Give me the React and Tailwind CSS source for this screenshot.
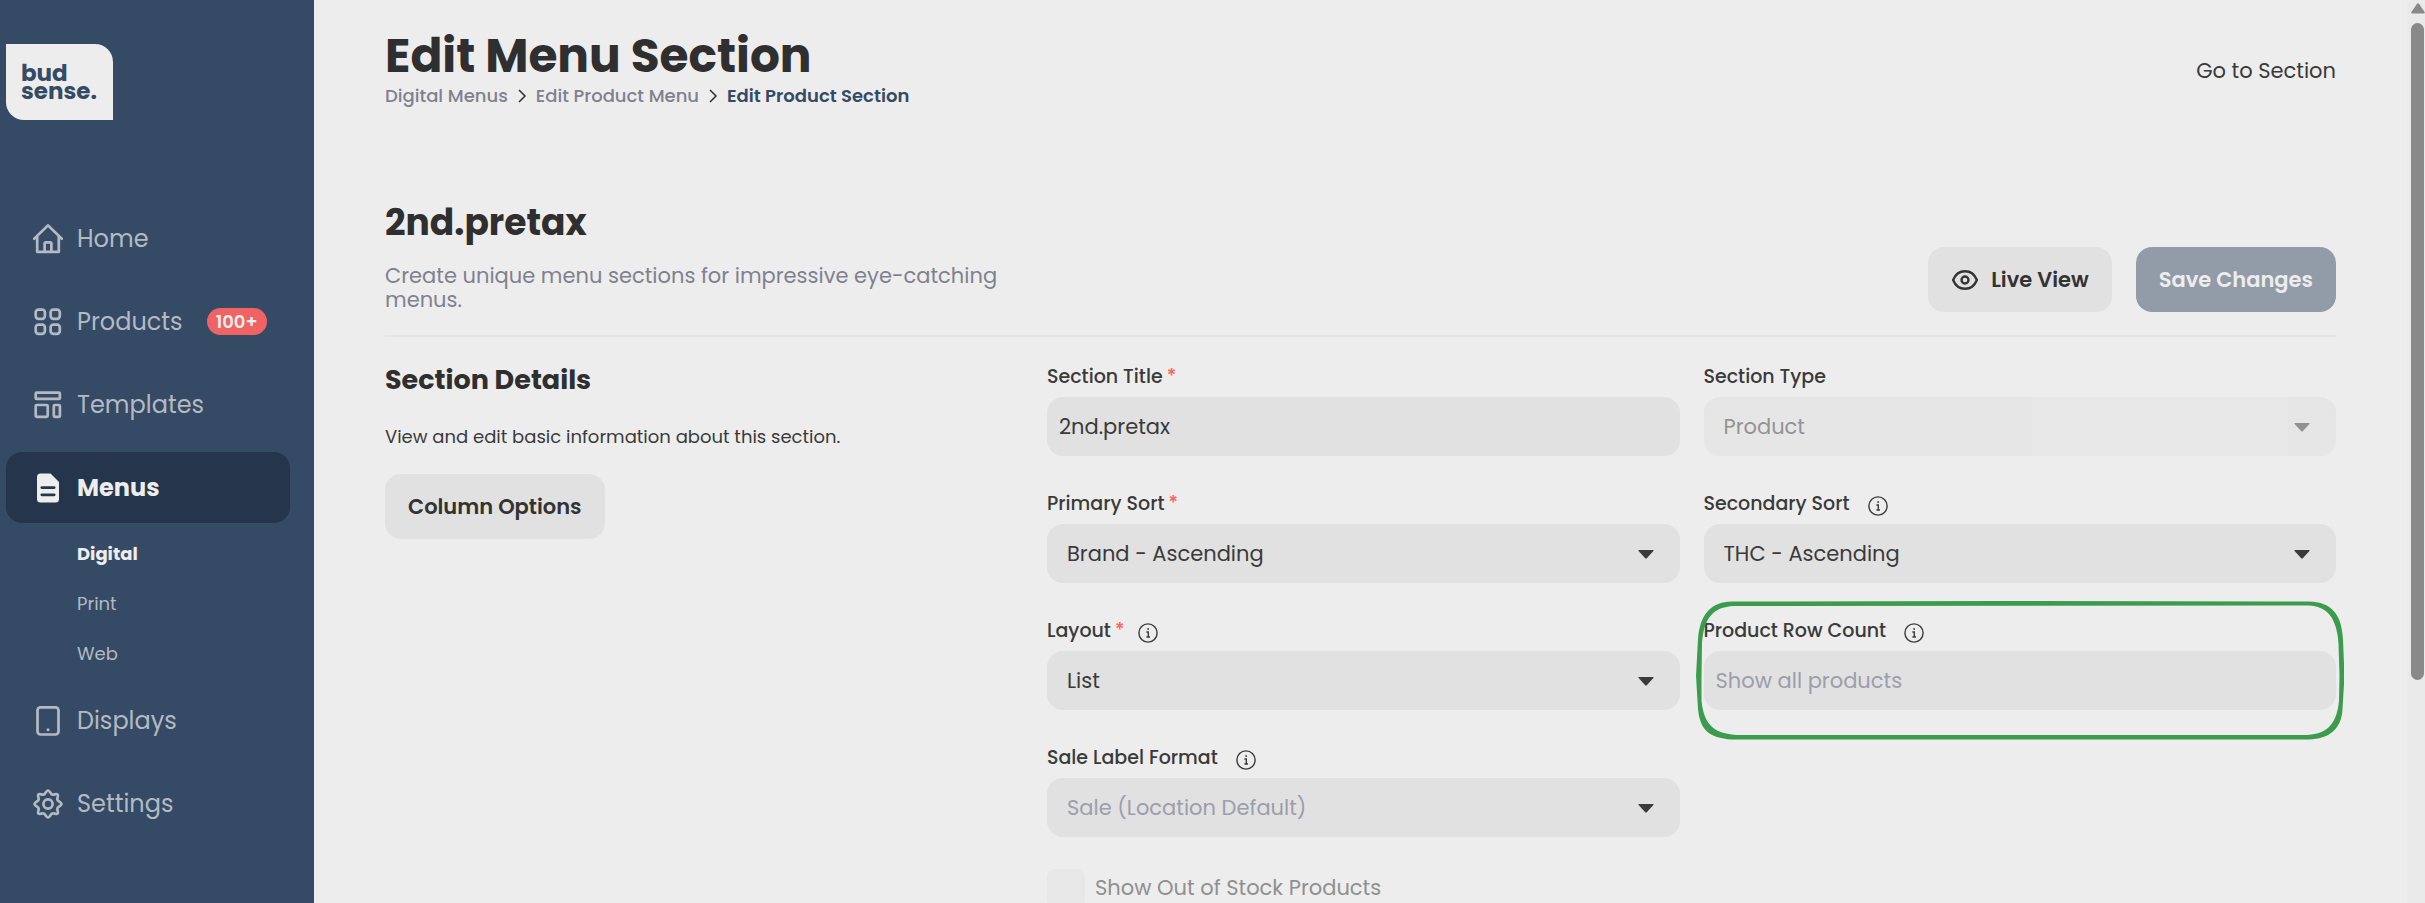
import React from 'react';

const navClass = 'flex h-[71px] items-center rounded-2xl pl-[26px] text-2xl text-[#b3bac3]';

const Icon = ({ children, className = 'h-8 w-8' }) => (
  <svg
    viewBox="0 0 32 32"
    className={className}
    fill="none"
    stroke="currentColor"
    strokeWidth="2.7"
    strokeLinecap="round"
    strokeLinejoin="round"
    aria-hidden="true"
  >
    {children}
  </svg>
);

const HomeIcon = () => (
  <Icon>
    <path d="M2.2 15.8 L16 2.4 L29.8 15.8" />
    <path d="M5.2 14 V28.8 H26.8 V14" />
    <path d="M12.6 28.4 V20.6 Q12.6 19.4 13.8 19.4 H18.2 Q19.4 19.4 19.4 20.6 V28.4" />
  </Icon>
);

const ProductsIcon = () => (
  <Icon>
    <rect x="3.7" y="3.7" width="9.2" height="9.2" rx="2.8" />
    <rect x="18.6" y="3.7" width="9.2" height="9.2" rx="2.8" />
    <rect x="3.7" y="18.6" width="9.2" height="9.2" rx="2.8" />
    <rect x="18.6" y="18.6" width="9.2" height="9.2" rx="2.8" />
  </Icon>
);

const TemplatesIcon = () => (
  <Icon>
    <rect x="3.7" y="3.7" width="24.2" height="6.2" rx="1" />
    <rect x="3.7" y="16" width="12" height="11.8" rx="1" />
    <rect x="21.8" y="16" width="6.1" height="11.8" rx="1" />
  </Icon>
);

const MenusIcon = () => (
  <Icon>
    <path
      d="M8.5 1.5 H18.5 L27 10 V27 Q27 30.5 23.5 30.5 H8.5 Q5 30.5 5 27 V5 Q5 1.5 8.5 1.5 Z"
      fill="currentColor"
      stroke="none"
    />
    <path d="M9.8 15.6 H22.2 M9.8 22.8 H22.2" stroke="#25364c" />
  </Icon>
);

const DisplaysIcon = () => (
  <Icon>
    <rect x="5.5" y="2.3" width="21" height="27.2" rx="3" />
    <circle cx="16" cy="24.8" r="1.5" fill="currentColor" stroke="none" />
  </Icon>
);

const SettingsIcon = () => (
  <Icon>
    <path d="M16 2.5 C18 2.5 18.6 6 20.2 6.6 C21.8 7.3 24.3 5.1 25.6 6.4 C26.9 7.7 24.7 10.2 25.4 11.8 C26 13.4 29.5 14 29.5 16 C29.5 18 26 18.6 25.4 20.2 C24.7 21.8 26.9 24.3 25.6 25.6 C24.3 26.9 21.8 24.7 20.2 25.4 C18.6 26 18 29.5 16 29.5 C14 29.5 13.4 26 11.8 25.4 C10.2 24.7 7.7 26.9 6.4 25.6 C5.1 24.3 7.3 21.8 6.6 20.2 C6 18.6 2.5 18 2.5 16 C2.5 14 6 13.4 6.6 11.8 C7.3 10.2 5.1 7.7 6.4 6.4 C7.7 5.1 10.2 7.3 11.8 6.6 C13.4 6 14 2.5 16 2.5 Z" />
    <circle cx="16" cy="16" r="4.6" />
  </Icon>
);

const EyeIcon = () => (
  <Icon className="h-7 w-7">
    <path d="M2.4 16 C5 9.6 10 6 16 6 S27 9.6 29.6 16 C27 22.4 22 26 16 26 S5 22.4 2.4 16 Z" />
    <circle cx="16" cy="16" r="4" />
  </Icon>
);

const InfoIcon = () => (
  <svg viewBox="0 0 20 20" className="h-5 w-5" fill="none" stroke="currentColor" strokeWidth="1.4" aria-hidden="true">
    <circle cx="10" cy="10" r="9.1" />
    <path d="M8.4 9 H10.3 V14 M8.4 14 H12" />
    <circle cx="10.1" cy="6" r="0.9" fill="currentColor" stroke="none" />
  </svg>
);

const Crumb = () => (
  <svg viewBox="0 0 10 16" className="h-4 w-[10px]" fill="none" stroke="#2f2f2f" strokeWidth="1.5" aria-hidden="true">
    <path d="M2 2 L8 8 L2 14" />
  </svg>
);

// hand-drawn marker around a field
const Highlight = () => (
  <svg
    viewBox="0 0 648 139"
    preserveAspectRatio="none"
    className="pointer-events-none absolute -top-2 -left-2 h-[139px] w-[calc(100%+16px)]"
    aria-hidden="true"
  >
    <path
      fill="#3c9c4e"
      fillRule="evenodd"
      d="M36 0.5 L300 0 L612 0.5 C636 1 645 14 646.5 38 L648 75 L646 108 C645 128 633 138 612 138.5 L36 138.5 C12 137 4 128 2 108 L0 75 L2 38 C4 14 14 1 36 0.5 Z M38 5 C16 6 8 18 6 42 L5.5 75 L5.5 100 C8 122 16 132 40 134 L610 134 C628 133 640 126 642.5 100 L643 75 L642 42 C640 16 630 5 612 4.5 Z"
    />
  </svg>
);

const NavItem = ({ icon, label, badge, active }) => (
  <a href="#" className={active ? `${navClass} bg-[#25364c] font-bold text-[#ededed]` : navClass}>
    {icon}
    <span className="ml-[13px]">{label}</span>
    {badge && (
      <span className="ml-6 flex h-[27px] w-[60px] items-center justify-center rounded-full bg-[#f06364] text-lg font-semibold text-[#ededed]">
        {badge}
      </span>
    )}
  </a>
);

const Label = ({ id, text, required, info }) => (
  <div className="flex h-[42px] items-center pt-[3px] text-[19px] font-medium">
    <label htmlFor={id}>
      {text}
      {required && <span className="ml-1 text-[#ff6161]">*</span>}
    </label>
    {info && (
      <button type="button" aria-label={`About ${text}`} className={required ? 'ml-[14px] pt-0.5' : 'ml-[18px] pt-0.5'}>
        <InfoIcon />
      </button>
    )}
  </div>
);

const SelectField = ({ id, label, value, required, info, disabled, muted }) => (
  <div>
    <Label id={id} text={label} required={required} info={info} />
    <div className={disabled ? 'relative opacity-50' : 'relative'}>
      <select
        id={id}
        disabled={disabled}
        className={`h-[59px] w-full appearance-none rounded-2xl bg-[#e1e1e1] px-5 text-[21px] opacity-100 ${muted ? 'text-[#9c9eab]' : ''}`}
      >
        <option>{value}</option>
      </select>
      <svg viewBox="0 0 16 9" className="pointer-events-none absolute top-[26px] right-[26px] h-[9px] w-4" aria-hidden="true">
        <path d="M1 0 H15 Q16 0 15.4 1 L9 8 Q8 9 7 8 L0.6 1 Q0 0 1 0 Z" fill="#3a3a3a" />
      </svg>
    </div>
  </div>
);

const TextField = ({ id, label, value, placeholder, required, info }) => (
  <div>
    <Label id={id} text={label} required={required} info={info} />
    <input
      id={id}
      type="text"
      defaultValue={value}
      placeholder={placeholder}
      className="h-[59px] w-full rounded-2xl bg-[#e1e1e1] px-3 text-[21px] placeholder:text-[#9c9eab]"
    />
  </div>
);

const Sidebar = () => (
  <aside className="w-[314px] shrink-0 bg-[#354a64] pr-6 pl-1.5">
    <a
      href="#"
      className="mt-11 flex h-[76px] w-[107px] flex-col justify-center rounded-tr-[18px] rounded-bl-[18px] bg-[#ededed] pl-[15px] text-[23px] leading-[18px] font-bold text-[#354a64]"
    >
      <span>bud</span>
      <span>sense.</span>
    </a>
    <nav className="mt-[83px] flex flex-col gap-3">
      <NavItem icon={<HomeIcon />} label="Home" />
      <NavItem icon={<ProductsIcon />} label="Products" badge="100+" />
      <NavItem icon={<TemplatesIcon />} label="Templates" />
      <div>
        <NavItem icon={<MenusIcon />} label="Menus" active />
        <ul className="mt-1.5 -mb-1.5 pl-[71px] text-lg text-[#b3bac3]">
          <li className="flex h-[50px] items-center">
            <a href="#" className="font-bold text-[#ededed]">Digital</a>
          </li>
          <li className="flex h-[50px] items-center">
            <a href="#">Print</a>
          </li>
          <li className="flex h-[50px] items-center">
            <a href="#">Web</a>
          </li>
        </ul>
      </div>
      <NavItem icon={<DisplaysIcon />} label="Displays" />
      <NavItem icon={<SettingsIcon />} label="Settings" />
    </nav>
  </aside>
);

const App = () => {
  return (
    <div className="flex h-screen overflow-hidden bg-[#ededed] font-['Poppins','Inter',sans-serif] text-[#3a3a3a]">
      <Sidebar />

      <main className="min-w-0 flex-1 overflow-hidden pr-[71px] pl-[71px]">
        <header className="flex items-center justify-between pt-[29px]">
          <div>
            <h1 className="text-[47px] leading-[53px] font-bold text-[#2f2f2f]">Edit Menu Section</h1>
            <nav className="flex h-[27px] items-center gap-[9px] text-lg font-medium text-[#7f818d]">
              <a href="#">Digital Menus</a>
              <Crumb />
              <a href="#">Edit Product Menu</a>
              <Crumb />
              <a href="#" className="font-semibold text-[#354a64]">Edit Product Section</a>
            </nav>
          </div>
          <a href="#" className="pt-1 text-[21px]">Go to Section</a>
        </header>

        <section className="mt-[88px] flex items-end justify-between border-b-2 border-[#e5e5e5] pb-[23px]">
          <div className="w-[632px]">
            <h2 className="text-4xl leading-[52px] font-bold text-[#2f2f2f]">2nd.pretax</h2>
            <p className="mt-[15px] text-[21px] leading-6 text-[#7f818d]">
              Create unique menu sections for impressive eye-catching menus.
            </p>
          </div>
          <div className="flex gap-6">
            <button type="button" className="flex h-[65px] items-center gap-3 rounded-2xl bg-[#e1e1e1] px-[23px] text-[21px] font-semibold text-[#333333]">
              <EyeIcon />
              Live View
            </button>
            <button type="button" className="h-[65px] rounded-2xl bg-[#929ca9] px-[23px] text-[21px] font-semibold text-[#ededed]">
              Save Changes
            </button>
          </div>
        </section>

        <section className="grid grid-cols-[662fr_1289fr] pt-[18px]">
          <div>
            <h3 className="text-[27px] leading-[50px] font-bold text-[#2f2f2f]">Section Details</h3>
            <p className="mt-[18px] text-lg leading-[28px]">View and edit basic information about this section.</p>
            <button type="button" className="mt-[23px] h-[65px] rounded-2xl bg-[#e1e1e1] px-[23px] text-[21px] font-semibold text-[#333333]">
              Column Options
            </button>
          </div>

          <form className="grid grid-cols-2 gap-x-6 gap-y-[26px]">
            <TextField id="title" label="Section Title" value="2nd.pretax" required />
            <SelectField id="type" label="Section Type" value="Product" disabled />
            <SelectField id="primary" label="Primary Sort" value="Brand - Ascending" required />
            <SelectField id="secondary" label="Secondary Sort" value="THC - Ascending" info />
            <SelectField id="layout" label="Layout" value="List" required info />
            <div className="relative">
              <TextField id="rows" label="Product Row Count" placeholder="Show all products" info />
              <Highlight />
            </div>
            <SelectField id="sale" label="Sale Label Format" value="Sale (Location Default)" info muted />
            <label className="col-span-2 mt-1.5 flex items-center gap-2.5 text-[21px] text-[#909090]">
              <input type="checkbox" disabled className="h-[38px] w-[38px] appearance-none rounded-lg bg-[#e7e7e7]" />
              Show Out of Stock Products
            </label>
          </form>
        </section>
      </main>

      <div className="flex w-[18px] shrink-0 flex-col items-end bg-[#eaeaea] pt-[3px]" aria-hidden="true">
        <svg viewBox="0 0 14 11" className="h-[11px] w-[14px]">
          <path d="M6 0.8 Q7 -0.4 8 0.8 L13.6 9 Q14.2 10.6 12.8 10.6 H1.2 Q-0.2 10.6 0.4 9 Z" fill="#898989" />
        </svg>
        <div className="mt-[9px] mr-px h-[73%] w-[13px] rounded-full bg-[#898989]" />
      </div>
    </div>
  );
};

export default App;
